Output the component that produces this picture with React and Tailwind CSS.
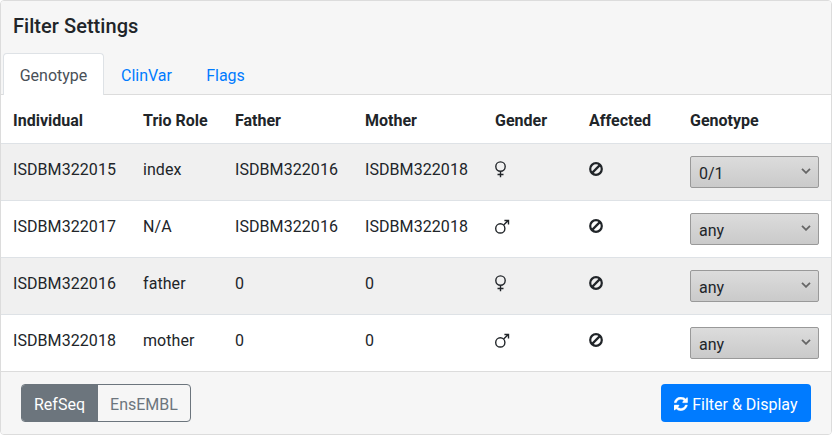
const columns = ["Individual", "Trio Role", "Father", "Mother", "Gender", "Affected", "Genotype"];

const people = [
  { id: "ISDBM322015", role: "index", father: "ISDBM322016", mother: "ISDBM322018", female: true, genotype: "0/1" },
  { id: "ISDBM322017", role: "N/A", father: "ISDBM322016", mother: "ISDBM322018", female: false, genotype: "any" },
  { id: "ISDBM322016", role: "father", father: "0", mother: "0", female: true, genotype: "any" },
  { id: "ISDBM322018", role: "mother", father: "0", mother: "0", female: false, genotype: "any" },
];

const grid = "grid grid-cols-[130px_92px_130px_130px_94px_101px_1fr]";

function Gender({ female }) {
  return (
    <svg className="block h-[18px] w-[16px]" viewBox="0 0 16 18" fill="none" stroke="currentColor" strokeWidth="1.4">
      {female ? (
        <path d="M5.5 10.3A4.7 4.7 0 1 0 5.5 .9a4.7 4.7 0 0 0 0 9.4ZM5.5 10.3V16.3M2.5 13.5h6" />
      ) : (
        <>
          <circle cx="5.3" cy="10.4" r="4.6" />
          <path d="M8.6 7.1 13.3 2.4M9.4 2.5h4.1v4.1" />
        </>
      )}
    </svg>
  );
}

function Ban() {
  return (
    <svg className="block size-[14px]" viewBox="0 0 14 14" fill="none" stroke="currentColor" strokeWidth="2.2">
      <circle cx="7" cy="7" r="5.8" />
      <path d="m2.9 11.1 8.2-8.2" />
    </svg>
  );
}

function Refresh() {
  return (
    <svg className="mr-1 mt-[2px] block size-[13.7px]" viewBox="0 0 1536 1536" fill="currentColor" stroke="currentColor" strokeWidth="40">
      <path d="M1511 928q0 5-1 7-64 268-268 434.5t-478 166.5q-146 0-282.5-55t-243.5-157l-129 129q-19 19-45 19t-45-19-19-45v-448q0-26 19-45t45-19h448q26 0 45 19t19 45-19 45l-137 137q71 66 161 102t187 36q134 0 250-65t186-179q11-17 53-117 8-23 30-23h192q13 0 22.5 9.5t9.5 22.5zm25-800v448q0 26-19 45t-45 19h-448q-26 0-45-19t-19-45 19-45l138-138q-148-137-349-137-134 0-250 65t-186 179q-11 17-53 117-8 23-30 23h-199q-13 0-22.5-9.5t-9.5-22.5v-7q65-268 270-434.5t480-166.5q146 0 284 55.5t245 156.5l130-129q19-19 45-19t45 19 19 45z" />
    </svg>
  );
}

export default function App() {
  return (
    <div className="flex h-[435px] w-[832px] flex-col overflow-hidden rounded border border-[#dcdcdc] bg-white font-['Roboto',sans-serif] text-base text-[#212529]">
      <header className="h-[94px] shrink-0 border-b border-[#dcdcdc] bg-[#f6f6f6]">
        <h5 className="h-[52px] px-3 pt-3 text-[20px] font-medium leading-[26px] tracking-[0.05px]">Filter Settings</h5>
        <nav className="flex h-[42px] pl-[2px]">
          <button className="h-[42px] w-[101px] rounded-t border border-b-0 border-[#dee2e6] bg-white pt-[3px] text-[#495057]">Genotype</button>
          <button className="h-[42px] w-[85px] pt-[3px] text-[#007bff]">ClinVar</button>
          <button className="h-[42px] w-[73px] pt-[3px] text-[#007bff]">Flags</button>
        </nav>
      </header>
      <main className="flex-1">
        <div className={grid + " h-12 items-center font-bold"}>
          {columns.map((c) => (
            <div key={c} className="px-3 pt-1">{c}</div>
          ))}
        </div>
        {people.map((p) => (
          <div key={p.id} className={grid + " h-[57px] border-t border-[#dee2e6] leading-6 odd:bg-white even:bg-[#f0f0f0]"}>
            <div className="pl-3 pt-[14px] tracking-[0.07px]">{p.id}</div>
            <div className="pl-3 pt-[14px] tracking-[0.07px]">{p.role}</div>
            <div className="pl-3 pt-[14px] tracking-[0.07px]">{p.father}</div>
            <div className="pl-3 pt-[14px] tracking-[0.07px]">{p.mother}</div>
            <div className="px-3 pt-[17px]"><Gender female={p.female} /></div>
            <div className="px-3 pt-[18px]"><Ban /></div>
            <div className="pl-3 pt-3">
              <button className="flex h-8 w-[129px] items-center justify-between rounded-[2px] border border-[#999] bg-linear-to-b from-[#dcdcdc] to-[#cacaca] pl-2 pr-[7px] pt-[4px]">
                {p.genotype}
                <svg className="mb-[7px] h-[6px] w-[10px]" viewBox="0 0 10 6" fill="none" stroke="#666" strokeWidth="1.8">
                  <path d="m1 .8 4 4 4-4" />
                </svg>
              </button>
            </div>
          </div>
        ))}
      </main>
      <footer className="flex h-[63px] shrink-0 items-start justify-between border-t border-[#dcdcdc] bg-[#f6f6f6] pl-5 pr-5 pt-3">
        <div className="flex h-[38px] w-[170px] overflow-hidden rounded border border-[#6c757d]">
          <button className="w-[76px] bg-[#6c757d] pr-px pt-[4px] text-white">RefSeq</button>
          <button className="flex-1 pt-[4px] text-[#6c757d]">EnsEMBL</button>
        </div>
        <button className="flex h-[38px] w-[150px] items-center justify-center rounded bg-[#007bff] text-white">
          <Refresh />
          <span className="pt-[4px]">Filter &amp; Display</span>
        </button>
      </footer>
    </div>
  );
}
